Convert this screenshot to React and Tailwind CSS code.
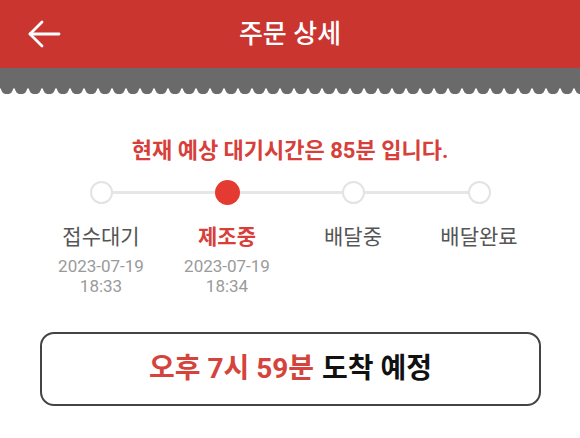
import React from "react";

const FONT = { fontFamily: "Roboto, 'Noto Sans CJK KR', 'Noto Sans', sans-serif" };

function Scallop() {
  const circles = [];
  for (let i = 0; i < 43; i++) {
    circles.push(<circle key={i} cx={7 + i * 14} cy={20} r={6.2} fill="#6a6a6a" />);
  }
  return (
    <svg width="580" height="26" viewBox="0 0 580 26" className="block">
      <rect x="0" y="0" width="580" height="20.5" fill="#6a6a6a" />
      {circles}
    </svg>
  );
}

const steps = [
  { label: "접수대기", date: "2023-07-19", time: "18:33", state: "done" },
  { label: "제조중", date: "2023-07-19", time: "18:34", state: "active" },
  { label: "배달중", state: "todo" },
  { label: "배달완료", state: "todo" },
];

export default function App() {
  return (
    <div className="w-[580px] h-[438px] bg-white overflow-hidden" style={FONT}>
      <div className="h-[68px] bg-[#cb3530] grid grid-cols-[1fr_auto_1fr] items-center">
        <div className="pl-[27px] flex items-center">
          <svg width="34" height="30" viewBox="0 0 34 30" fill="none" stroke="white" strokeWidth="2.8" strokeLinecap="round" strokeLinejoin="round">
            <path d="M32 15H3" />
            <path d="M15 3L3 15L15 27" />
          </svg>
        </div>
        <div className="text-white text-[26px] font-medium leading-none pb-[1px]">주문 상세</div>
        <div />
      </div>
      <Scallop />
      <div className="mt-[42px] text-center text-[22px] leading-[30px] font-bold text-[#d7403a]">
        현재 예상 대기시간은 85분 입니다.
      </div>
      <div className="mx-[38px] mt-[14px]">
        <div className="relative h-[24px]">
          <div className="absolute left-[63px] right-[63px] top-[10.5px] h-[3px] bg-[#e6e6e6]" />
          <div className="relative grid grid-cols-4 h-full">
            {steps.map((s, i) => (
              <div key={i} className="flex items-center justify-center">
                {s.state === "active" ? (
                  <div className="w-[25px] h-[25px] rounded-full bg-[#e53a32]" />
                ) : (
                  <div className="w-[23px] h-[23px] rounded-full bg-white border-[2.5px] border-[#e3e3e3]" />
                )}
              </div>
            ))}
          </div>
        </div>
        <div className="grid grid-cols-4 mt-[18px]">
          {steps.map((s, i) => (
            <div key={i} className="flex flex-col items-center">
              <div
                className={
                  "text-[21px] leading-[30px] " +
                  (s.state === "active" ? "font-bold text-[#d7403a]" : "text-[#555555]")
                }
              >
                {s.label}
              </div>
              {s.date && (
                <div className="mt-[4px] text-[17px] leading-[20px] text-[#9a9a9a] text-center">
                  <div>{s.date}</div>
                  <div>{s.time}</div>
                </div>
              )}
            </div>
          ))}
        </div>
      </div>
      <div className="mx-[40px] mt-[36px] w-[501px] h-[74px] border-2 border-[#444444] rounded-[14px] flex items-center justify-center text-[28px] font-bold leading-none">
        <span className="text-[#d4443c]">오후 7시 59분</span>
        <span className="text-[#111111] ml-[8px]">도착 예정</span>
      </div>
    </div>
  );
}
